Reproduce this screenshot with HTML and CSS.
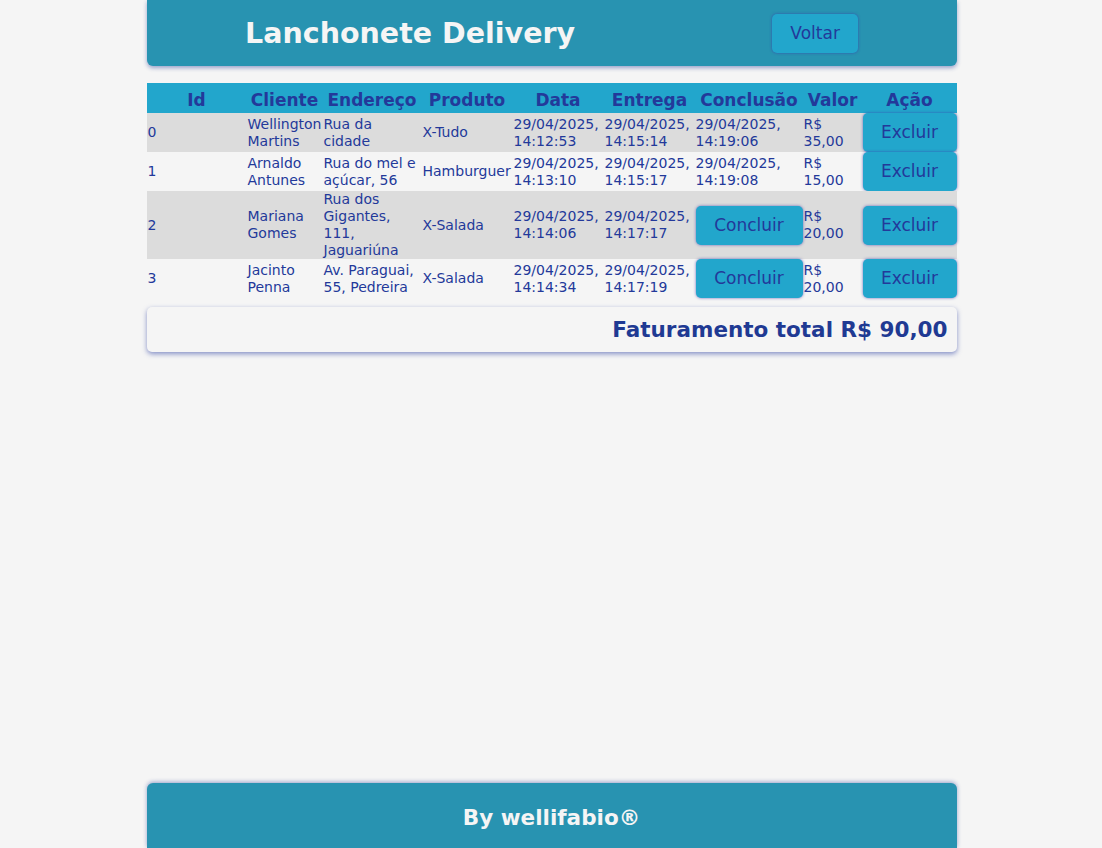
FILE: index.html
```html
<!DOCTYPE html>
<html lang="pt-BR">
<head>
<meta charset="utf-8">
<title>Lanchonete Delivery</title>
<link rel="stylesheet" href="styles.css">
</head>
<body>
<header class="topo">
  <h1 class="titulo">Lanchonete Delivery</h1>
  <button class="btn">Voltar</button>
</header>
<main class="conteudo">
  <table class="pedidos">
    <colgroup>
      <col class="c-id"><col class="c-cli"><col class="c-end"><col class="c-prod"><col class="c-data"><col class="c-ent"><col class="c-conc"><col class="c-val"><col class="c-acao">
    </colgroup>
    <thead>
      <tr><th>Id</th><th>Cliente</th><th>Endereço</th><th>Produto</th><th>Data</th><th>Entrega</th><th>Conclusão</th><th>Valor</th><th>Ação</th></tr>
    </thead>
    <tbody>
      <tr>
        <td>0</td><td>Wellington Martins</td><td>Rua da cidade</td><td>X-Tudo</td>
        <td>29/04/2025, 14:12:53</td><td>29/04/2025, 14:15:14</td><td>29/04/2025, 14:19:06</td>
        <td>R$ 35,00</td><td><button class="btn">Excluir</button></td>
      </tr>
      <tr>
        <td>1</td><td>Arnaldo Antunes</td><td>Rua do mel e açúcar, 56</td><td>Hamburguer</td>
        <td>29/04/2025, 14:13:10</td><td>29/04/2025, 14:15:17</td><td>29/04/2025, 14:19:08</td>
        <td>R$ 15,00</td><td><button class="btn">Excluir</button></td>
      </tr>
      <tr>
        <td>2</td><td>Mariana Gomes</td><td>Rua dos Gigantes, 111, Jaguariúna</td><td>X-Salada</td>
        <td>29/04/2025, 14:14:06</td><td>29/04/2025, 14:17:17</td><td><button class="btn">Concluir</button></td>
        <td>R$ 20,00</td><td><button class="btn">Excluir</button></td>
      </tr>
      <tr>
        <td>3</td><td>Jacinto Penna</td><td>Av. Paraguai, 55, Pedreira</td><td>X-Salada</td>
        <td>29/04/2025, 14:14:34</td><td>29/04/2025, 14:17:19</td><td><button class="btn">Concluir</button></td>
        <td>R$ 20,00</td><td><button class="btn">Excluir</button></td>
      </tr>
    </tbody>
  </table>
  <div class="total">Faturamento total R$ 90,00</div>
</main>
<footer class="rodape">By wellifabio®</footer>
</body>
</html>
```
FILE: styles.css
```css
html, body {
  margin: 0;
  padding: 0;
}
body {
  background: #f5f5f5;
  font-family: Verdana, "DejaVu Sans", sans-serif;
  color: #23399a;
  min-height: 100vh;
  display: flex;
  flex-direction: column;
  padding-left: 1px;
  box-sizing: border-box;
}
.topo {
  width: 810px;
  height: 66px;
  margin: 0 auto;
  background: #2893b1;
  border-radius: 0 0 6px 6px;
  box-shadow: 0 2px 4px rgba(40, 60, 150, 0.45);
  display: flex;
  align-items: center;
  justify-content: space-around;
}
.titulo {
  margin: 0;
  font-size: 28.5px;
  font-weight: bold;
  color: #f5f5f5;
}
.btn {
  display: block;
  font-family: Verdana, "DejaVu Sans", sans-serif;
  font-size: 17px;
  line-height: 21px;
  padding: 9px 18px;
  border: none;
  border-radius: 5px;
  background: #22a6cc;
  color: #23399a;
  box-shadow: 0 0 3px rgba(60, 60, 170, 0.75);
  cursor: pointer;
  width: 100%;
}
.topo .btn {
  width: auto;
}
.conteudo {
  width: 810px;
  margin: 17px auto 0;
}
.pedidos {
  width: 810px;
  border-collapse: collapse;
  table-layout: fixed;
}
.c-id { width: 100px; }
.c-cli { width: 76px; }
.c-end { width: 99px; }
.c-prod { width: 91px; }
.c-data { width: 91px; }
.c-ent { width: 92px; }
.c-conc { width: 107px; }
.c-val { width: 60px; }
.c-acao { width: 94px; }
.pedidos th {
  background: #22a6cc;
  height: 30px;
  padding: 3px 0 0;
  box-sizing: border-box;
  font-size: 17px;
  font-weight: bold;
  text-align: center;
  color: #23399a;
}
.pedidos td {
  padding: 0 0 0 1px;
  font-size: 14px;
  line-height: 17px;
  text-align: left;
  vertical-align: middle;
}
.pedidos td:nth-child(7),
.pedidos td:nth-child(9) {
  padding-left: 0;
}
.pedidos tbody tr:nth-child(odd) {
  background: #dcdcdc;
}
.pedidos tbody tr:nth-child(even) {
  background: #f5f5f5;
}
.total {
  margin-top: 9px;
  height: 45px;
  line-height: 45px;
  padding: 0 9px;
  text-align: right;
  font-size: 21.5px;
  font-weight: bold;
  color: #1f3a93;
  background: #f5f5f5;
  border-radius: 5px;
  box-shadow: 0 2px 5px rgba(40, 60, 160, 0.55);
}
.rodape {
  width: 810px;
  height: 65px;
  margin: auto auto 0;
  padding-top: 3px;
  box-sizing: border-box;
  background: #2893b1;
  border-radius: 6px 6px 0 0;
  box-shadow: 0 -1px 4px rgba(40, 60, 150, 0.45);
  display: flex;
  align-items: center;
  justify-content: center;
  color: #f5f5f5;
  font-size: 21.5px;
  font-weight: bold;
}
```
